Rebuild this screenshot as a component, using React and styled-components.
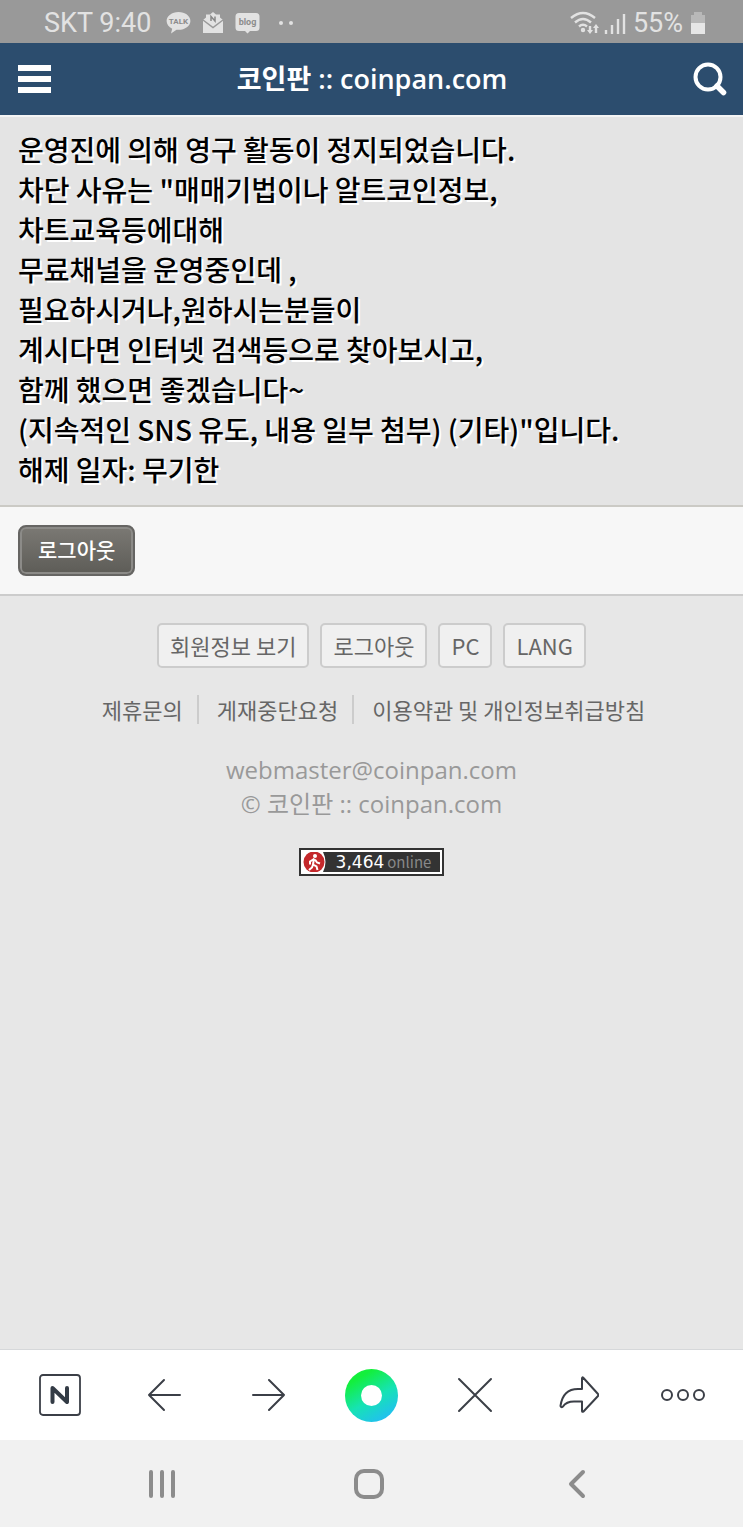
import React from 'react'
import styled, { createGlobalStyle } from 'styled-components'

const messageLines = [
  '운영진에 의해 영구 활동이 정지되었습니다.',
  '차단 사유는 "매매기법이나 알트코인정보,',
  '차트교육등에대해',
  '무료채널을 운영중인데 ,',
  '필요하시거나,원하시는분들이',
  '계시다면 인터넷 검색등으로 찾아보시고,',
  '함께 했으면 좋겠습니다~',
  '(지속적인 SNS 유도, 내용 일부 첨부) (기타)"입니다.',
  '해제 일자: 무기한',
]

const StatusBar = () => (
  <Status>
    <StatusGroup>
      <span>SKT 9:40</span>
      <StatusIcons>
        <svg width="25" height="24" viewBox="0 0 25 24">
          <path d="M12.500 1C5.900 1 .6 5 .6 10c0 3.300 2.200 6.100 5.600 7.700L5 22.500l5.500-3.800 2 .1c6.600 0 11.900-4 11.900-8.900S19.100 1 12.500 1z" fill="#e2e2e2" />
          <text x="12.500" y="13" textAnchor="middle" fontSize="8" fontWeight="700" fill="#8c8c8c">TALK</text>
        </svg>
        <svg width="22" height="24" viewBox="0 0 22 24">
          <path d="M1 9l3-2.600V3.500h4L11 1l3 2.500h4v2.900L21 9v13H1z" fill="#e2e2e2" />
          <path d="M1 9l10 7.500L21 9" fill="none" stroke="#999" strokeWidth="1.500" />
          <path d="M9 10v-4.500l4 4.500v-4.500" fill="none" stroke="#888" strokeWidth="1.500" />
        </svg>
        <svg width="25" height="24" viewBox="0 0 25 24">
          <path d="M4 2h17q3.500 0 3.500 3.500v11Q24.500 20 21 20h-6l-2.500 2.500L10 20H4Q.5 20 .5 16.500v-11Q.5 2 4 2z" fill="#e2e2e2" />
          <text x="12.500" y="14" textAnchor="middle" fontSize="9" fontWeight="700" fill="#8c8c8c">blog</text>
        </svg>
        <svg width="24" height="24" viewBox="0 0 24 24">
          <circle cx="10" cy="12" r="2" fill="#e2e2e2" />
          <circle cx="20" cy="12" r="2" fill="#e2e2e2" />
        </svg>
      </StatusIcons>
    </StatusGroup>
    <StatusGroup $tight>
      <svg width="56" height="26" viewBox="0 0 56 26" fill="none" stroke="#e2e2e2" strokeWidth="2.400">
        <path d="M1 8q12-10 24 0M5 12.500q8-7 16 0M9 16.500q4-3.500 8 0" />
        <circle cx="13" cy="20" r="1" />
        <path d="M20 16v6M26 23v-6" />
        <path d="M17 20h6l-3 4zM23 18h6l-3-4z" fill="#e2e2e2" stroke="none" />
        <path d="M36 20v4M42 15v9M48 9v15M54 4v20" />
      </svg>
      <span>55%</span>
      <svg width="16" height="24" viewBox="0 0 16 24">
        <path d="M4 1h8v3h3v9H1V4h3z" fill="#b8b8b8" />
        <path d="M1 12h14v11H1z" fill="#e6e6e6" />
      </svg>
    </StatusGroup>
  </Status>
)

const App = () => {
  return (
    <Page>
      <GlobalStyle />
      <StatusBar />
      <Header>
        <IconButton aria-label="메뉴">
          <svg width="33" height="28" viewBox="0 0 33 28" fill="#fff">
            <path d="M0 0h33v6H0zM0 11h33v6H0zM0 22h33v6H0z" />
          </svg>
        </IconButton>
        <h1>코인판 :: coinpan.com</h1>
        <IconButton aria-label="검색">
          <svg width="34" height="34" viewBox="0 0 34 34" fill="none" stroke="#fff">
            <circle cx="15" cy="15" r="12.500" strokeWidth="4" />
            <path d="M24 24l6.500 6.500" strokeWidth="5.500" strokeLinecap="round" />
          </svg>
        </IconButton>
      </Header>
      <main>
        <Message>
          {messageLines.map((line) => <div key={line}>{line}</div>)}
        </Message>
        <ActionBar>
          <LogoutButton>로그아웃</LogoutButton>
        </ActionBar>
      </main>
      <Footer>
        <FooterButtons>
          <button>회원정보 보기</button>
          <button>로그아웃</button>
          <button>PC</button>
          <button>LANG</button>
        </FooterButtons>
        <FooterLinks>
          <a href="#contact">제휴문의</a>
          <a href="#takedown">게재중단요청</a>
          <a href="#terms">이용약관 및 개인정보취급방침</a>
        </FooterLinks>
        <Copyright>
          <a href="mailto:webmaster@coinpan.com">webmaster@coinpan.com</a>
          <span>© 코인판 :: coinpan.com</span>
        </Copyright>
        <Online>
          <svg width="24" height="20" viewBox="0 0 24 20">
            <path d="M20 0h4v20h-4q5-10 0-20z" fill="#333" />
            <circle cx="11" cy="10" r="10.500" fill="#c4282b" />
            <circle cx="12" cy="4" r="2" fill="#fff" />
            <path d="M11 6.500l-1 6 3.500 2 1 3.500M10 12.500l-1 3-3 2.500M11 7l-4 2.500v3M12 7.500l2 3 3 1" fill="none" stroke="#fff" strokeWidth="2" />
          </svg>
          <p><b>3,464</b><span>online</span></p>
        </Online>
      </Footer>
      <Toolbar>
        <IconButton aria-label="네이버 홈">
          <svg width="42" height="42" viewBox="0 0 42 42" fill="none" stroke="#3b3f47">
            <rect x="1" y="1" width="40" height="40" rx="3" strokeWidth="1.800" />
            <path d="M13.500 28V14L28 28V14" stroke="#333b45" strokeWidth="4" strokeLinejoin="round" strokeLinecap="round" />
          </svg>
        </IconButton>
        <IconButton aria-label="뒤로">
          <ThinIcon viewBox="0 0 40 40"><path d="M36 20H5M20 5L5 20l15 15" /></ThinIcon>
        </IconButton>
        <IconButton aria-label="앞으로">
          <ThinIcon viewBox="0 0 40 40"><path d="M5 20h31M21 5l15 15-15 15" /></ThinIcon>
        </IconButton>
        <IconButton aria-label="그린닷">
          <GreenDot />
        </IconButton>
        <IconButton aria-label="닫기">
          <ThinIcon viewBox="0 0 40 40"><path d="M4 4l32 32M36 4L4 36" /></ThinIcon>
        </IconButton>
        <IconButton aria-label="공유">
          <ThinIcon viewBox="0 0 40 40">
            <path d="M23 3.500q0-2 1.500-.5L39 19q.8 1 0 2L24.500 36.500q-1.500 1-1.500-.8V26.500H15c-6 0-9 2-11 5q-2 1.500-2.500-.5C3 20 9 14 19 14h4z" />
          </ThinIcon>
        </IconButton>
        <IconButton aria-label="더보기">
          <svg width="44" height="14" viewBox="0 0 44 14" fill="none" stroke="#3b3f47" strokeWidth="2">
            <circle cx="6" cy="7" r="5" />
            <circle cx="22" cy="7" r="5" />
            <circle cx="38" cy="7" r="5" />
          </svg>
        </IconButton>
      </Toolbar>
      <SystemNav>
        <IconButton aria-label="최근 앱">
          <NavIcon viewBox="0 0 30 30"><path d="M4 3v24M15 3v24M26 3v24" /></NavIcon>
        </IconButton>
        <IconButton aria-label="홈">
          <NavIcon viewBox="0 0 30 30"><rect x="2" y="2" width="26" height="26" rx="8" /></NavIcon>
        </IconButton>
        <IconButton aria-label="이전">
          <NavIcon viewBox="0 0 30 30"><path d="M21 3L9 15l12 12" /></NavIcon>
        </IconButton>
      </SystemNav>
    </Page>
  )
}

const GlobalStyle = createGlobalStyle`
  * { box-sizing: border-box; }
  body {
    margin: 0;
    font-family: "Noto Sans CJK KR", "Noto Sans", sans-serif;
  }
  h1, p { margin: 0; }
  button {
    font-family: inherit;
    cursor: pointer;
  }
  a { color: inherit; text-decoration: none; }
  svg { display: block; }
`

const Page = styled.div`
  display: flex;
  flex-direction: column;
  min-height: 100vh;
  background: #e7e7e7;
`

const Status = styled.div`
  display: flex;
  align-items: center;
  justify-content: space-between;
  height: 43px;
  padding: 2px 37px 0 44px;
  background: #999;
  color: #e2e2e2;
  font-family: Roboto, sans-serif;
  font-size: 27px;
`

const StatusGroup = styled.div`
  display: flex;
  align-items: center;
  gap: ${({ $tight }) => ($tight ? '7px' : '15px')};
`

const StatusIcons = styled.div`
  display: flex;
  align-items: center;
  gap: 11px;
`

const IconButton = styled.button`
  display: flex;
  align-items: center;
  justify-content: center;
  padding: 0;
  border: 0;
  background: none;
`

const Header = styled.header`
  display: flex;
  align-items: center;
  justify-content: space-between;
  height: 74px;
  padding: 0 16px 0 18px;
  border-bottom: 2px solid #f4f4f4;
  background: #2c4d6e;
  color: #fff;
  h1 {
    font-family: "Open Sans", "Noto Sans CJK KR", sans-serif;
    font-size: 27px;
    line-height: 40px;
    font-weight: 600;
  }
`

const Message = styled.div`
  padding: 12px 18px 16px;
  background: #e4e4e4;
  color: #000;
  font-size: 28px;
  font-weight: 500;
  line-height: 40px;
  text-shadow: 2px 2px 0 #fff;
`

const ActionBar = styled.div`
  padding: 18px;
  border-top: 2px solid #cbcac5;
  border-bottom: 2px solid #ccc;
  background: #f7f7f7;
`

const LogoutButton = styled.button`
  display: block;
  height: 51px;
  padding: 0 18px 4px;
  border: 2px solid #666563;
  border-radius: 8px;
  background: linear-gradient(#7b7974, #5d5c57);
  box-shadow: inset 0 0 0 2px #8c8b88;
  color: #fff;
  font-size: 21px;
  font-weight: 500;
`

const Footer = styled.footer`
  flex: 1;
  display: flex;
  flex-direction: column;
  align-items: center;
  padding: 27px 0;
`

const FooterButtons = styled.div`
  display: flex;
  gap: 11px;
  button {
    height: 45px;
    padding: 0 11px 2px;
    border: 2px solid #ccc;
    border-radius: 5px;
    background: #f0f0f0;
    color: #666;
    font-size: 22px;
  }
`

const FooterLinks = styled.nav`
  display: flex;
  margin-top: 27px;
  color: #666;
  font-size: 22px;
  line-height: 29px;
  a {
    padding: 0 14px 0 18px;
  }
  a + a {
    border-left: 2px solid #ccc;
  }
`

const Copyright = styled.div`
  display: flex;
  flex-direction: column;
  align-items: center;
  margin-top: 29px;
  color: #999;
  font-family: "Open Sans", "Noto Sans CJK KR", sans-serif;
  font-size: 24px;
  line-height: 34px;
`

const Online = styled.div`
  display: flex;
  margin-top: 27px;
  padding: 2px;
  width: 145px;
  height: 28px;
  border: 2px solid #333;
  background: #fff;
  p {
    flex: 1;
    display: flex;
    align-items: center;
    justify-content: center;
    gap: 3px;
    background: #333;
    line-height: 20px;
  }
  b {
    color: #fff;
    font-family: "DejaVu Sans", sans-serif;
    font-size: 17px;
    font-weight: 400;
  }
  span {
    color: #888;
    font-size: 15px;
  }
`

const Toolbar = styled.nav`
  display: grid;
  grid-template-columns: repeat(7, 1fr);
  height: 91px;
  padding: 0 8px;
  border-top: 1px solid #d6d8da;
  background: #fff;
`

const ThinIcon = styled.svg`
  width: 40px;
  height: 40px;
  fill: none;
  stroke: #3b3f47;
  stroke-width: 2px;
  stroke-linecap: round;
  stroke-linejoin: round;
`

const GreenDot = styled.span`
  width: 53px;
  height: 53px;
  border: 16px solid transparent;
  border-radius: 50%;
  background:
    linear-gradient(#fff, #fff) padding-box,
    linear-gradient(150deg, #13ef3c 20%, #16e3b4 55%, #22bdf5 90%) border-box;
`

const SystemNav = styled.nav`
  display: grid;
  grid-template-columns: repeat(3, 1fr);
  height: 87px;
  padding: 0 62px 0 58px;
  background: #f1f1f1;
`

const NavIcon = styled.svg`
  width: 30px;
  height: 30px;
  fill: none;
  stroke: #8c8c8c;
  stroke-width: 4px;
  stroke-linecap: round;
  stroke-linejoin: round;
`

export default App
